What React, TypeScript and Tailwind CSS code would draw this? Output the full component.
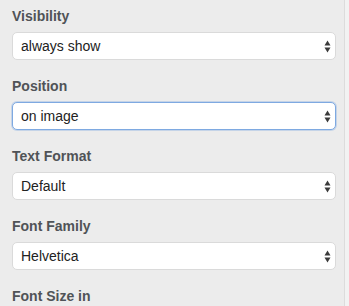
import React from "react";

function Arrows() {
  return (
    <svg width="7" height="13" viewBox="0 0 7 13" className="shrink-0">
      <polygon points="3.5,0.5 0.5,5.5 6.5,5.5" fill="#3a3a3a" />
      <polygon points="0.5,7.5 6.5,7.5 3.5,12.5" fill="#3a3a3a" />
    </svg>
  );
}

function Field({ label, value, focused }: { label: string; value?: string; focused?: boolean }) {
  return (
    <div className="flex flex-col">
      <div className="text-[14px] leading-[16px] font-bold text-[#505357] h-[16px]">{label}</div>
      {value !== undefined && (
        <div
          className={
            focused
              ? "mt-[8px] h-[28px] flex items-center justify-between pl-[8px] pr-[4px] bg-white rounded-[5px] border border-[#7ea9e1] shadow-[0_0_0_1px_rgba(126,169,225,0.35)]"
              : "mt-[8px] h-[28px] flex items-center justify-between pl-[8px] pr-[4px] bg-white rounded-[5px] border border-[#dadada]"
          }
        >
          <span className="text-[14px] text-[#222]">{value}</span>
          <Arrows />
        </div>
      )}
    </div>
  );
}

export default function App() {
  return (
    <div
      className="w-[349px] h-[306px] overflow-hidden flex bg-[#ececec]"
      style={{ fontFamily: '"Liberation Sans", Arial, sans-serif' }}
    >
      <div className="w-[344px] pl-[12px] pr-[8px] pt-[8px] flex flex-col gap-[18px]">
        <Field label="Visibility" value="always show" />
        <Field label="Position" value="on image" focused />
        <Field label="Text Format" value="Default" />
        <Field label="Font Family" value="Helvetica" />
        <Field label="Font Size in" />
      </div>
      <div className="w-[1px] bg-[#dcdcdc]" />
      <div className="flex-1 bg-[#f2f2f2]" />
    </div>
  );
}
